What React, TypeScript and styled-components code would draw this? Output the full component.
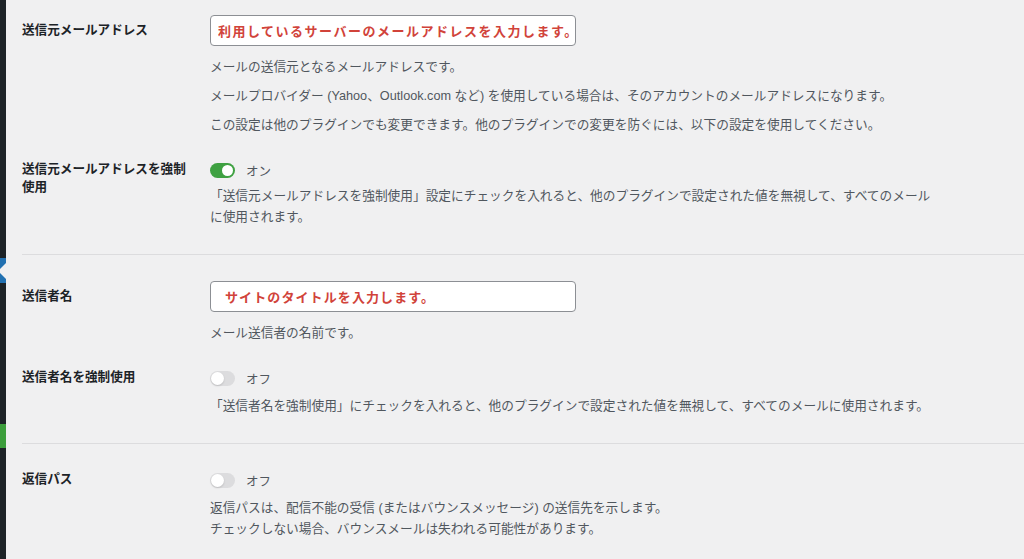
import React from 'react'
import styled, { createGlobalStyle } from 'styled-components'

const GlobalStyle = createGlobalStyle`
  html, body {
    margin: 0;
    padding: 0;
    background: #f0f0f1;
    overflow: hidden;
  }
  body {
    font-family: "Liberation Sans", "Noto Sans CJK JP", sans-serif;
    color: #1d2327;
  }
`

const Layout = styled.div`
  display: flex;
  height: 559px;
  width: 1024px;
  overflow: hidden;
`

const Sidebar = styled.div`
  flex: 0 0 6px;
  background: #1d2327;
  display: flex;
  flex-direction: column;
`

const MenuMarker = styled.div<{ $offset: number; $color: string; $height: number; $arrow?: boolean }>`
  position: relative;
  margin-top: ${p => p.$offset}px;
  height: ${p => p.$height}px;
  background: ${p => p.$color};
  overflow: hidden;

  &::after {
    content: '';
    display: ${p => (p.$arrow ? 'block' : 'none')};
    position: absolute;
    right: 0;
    top: 50%;
    margin-top: -8px;
    border: 8px solid transparent;
    border-right-color: #f0f0f1;
  }
`

const Main = styled.div`
  flex: 1;
  padding-left: 16px;
`

const Section = styled.div<{ $pt: number; $last?: boolean }>`
  padding: ${p => p.$pt}px 0 13px;
  border-bottom: ${p => (p.$last ? 'none' : '1px solid #dcdcde')};
`

const Row = styled.div<{ $pb?: number }>`
  display: grid;
  grid-template-columns: 188px 1fr;
  padding: 13px 0 ${p => p.$pb ?? 13}px;
`

const Label = styled.div<{ $withInput?: boolean }>`
  font-weight: 700;
  font-size: 12.6px;
  line-height: 18px;
  padding-top: ${p => (p.$withInput ? 6 : 0)}px;
  padding-right: 18px;
  color: #1d2327;
`

const Field = styled.div`
  display: flex;
  flex-direction: column;
  align-items: flex-start;
`

const TextInput = styled.input<{ $indent: number; $spacing: number }>`
  box-sizing: border-box;
  width: 366px;
  height: 31px;
  margin: 0;
  padding: 0 0 0 ${p => p.$indent}px;
  border: 1px solid #8c8f94;
  border-radius: 4px;
  background: #fff;
  font-family: "Noto Sans CJK JP", sans-serif;
  font-size: 13px;
  font-weight: 700;
  letter-spacing: ${p => p.$spacing}px;
  color: #d1433a;
  outline: none;
`

const Description = styled.p<{ $gap: number }>`
  margin: ${p => p.$gap}px 0 0;
  max-width: 732px;
  font-size: 12.7px;
  line-height: 21px;
  color: #50575e;
`

const ToggleLine = styled.div`
  display: flex;
  align-items: center;
  height: 21px;
  gap: 11px;
`

const Track = styled.span<{ $on?: boolean }>`
  position: relative;
  display: inline-block;
  width: 25px;
  height: 15px;
  border-radius: 8px;
  background: ${p => (p.$on ? '#3fa142' : '#dcdcde')};
`

const Knob = styled.span<{ $on?: boolean }>`
  position: absolute;
  top: ${p => (p.$on ? 2 : 1)}px;
  left: ${p => (p.$on ? 12 : 1)}px;
  width: ${p => (p.$on ? 11 : 13)}px;
  height: ${p => (p.$on ? 11 : 13)}px;
  border-radius: 50%;
  background: #fff;
  box-shadow: ${p => (p.$on ? 'none' : '0 1px 2px rgba(0,0,0,0.15)')};
`

const ToggleText = styled.span`
  font-size: 12.5px;
  color: #50575e;
`

const Toggle = ({ on }: { on?: boolean }) => (
  <ToggleLine>
    <Track $on={on}>
      <Knob $on={on} />
    </Track>
    <ToggleText>{on ? 'オン' : 'オフ'}</ToggleText>
  </ToggleLine>
)

export default function App() {
  return (
    <>
      <GlobalStyle />
      <Layout>
        <Sidebar>
          <MenuMarker $offset={258} $height={25} $color="#2271b1" $arrow />
          <MenuMarker $offset={141} $height={24} $color="#3c9e3c" />
        </Sidebar>
        <Main>
          <Section $pt={2}>
            <Row $pb={11}>
              <Label $withInput>送信元メールアドレス</Label>
              <Field>
                <TextInput
                  readOnly
                  $indent={7}
                  $spacing={1.5}
                  value="利用しているサーバーのメールアドレスを入力します。"
                />
                <Description $gap={11}>メールの送信元となるメールアドレスです。</Description>
                <Description $gap={8}>
                  メールプロバイダー (Yahoo、Outlook.com など) を使用している場合は、そのアカウントのメールアドレスになります。
                </Description>
                <Description $gap={8}>
                  この設定は他のプラグインでも変更できます。他のプラグインでの変更を防ぐには、以下の設定を使用してください。
                </Description>
              </Field>
            </Row>
            <Row>
              <Label>送信元メールアドレスを強制使用</Label>
              <Field>
                <Toggle on />
                <Description $gap={5}>
                  「送信元メールアドレスを強制使用」設定にチェックを入れると、他のプラグインで設定された値を無視して、すべてのメールに使用されます。
                </Description>
              </Field>
            </Row>
          </Section>

          <Section $pt={13}>
            <Row $pb={11}>
              <Label $withInput>送信者名</Label>
              <Field>
                <TextInput readOnly $indent={14} $spacing={1.1} value="サイトのタイトルを入力します。" />
                <Description $gap={11}>メール送信者の名前です。</Description>
              </Field>
            </Row>
            <Row>
              <Label>送信者名を強制使用</Label>
              <Field>
                <Toggle />
                <Description $gap={7}>
                  「送信者名を強制使用」にチェックを入れると、他のプラグインで設定された値を無視して、すべてのメールに使用されます。
                </Description>
              </Field>
            </Row>
          </Section>

          <Section $pt={13} $last>
            <Row>
              <Label>返信パス</Label>
              <Field>
                <Toggle />
                <Description $gap={7}>
                  返信パスは、配信不能の受信 (またはバウンスメッセージ) の送信先を示します。
                  <br />
                  チェックしない場合、バウンスメールは失われる可能性があります。
                </Description>
              </Field>
            </Row>
          </Section>
        </Main>
      </Layout>
    </>
  )
}
